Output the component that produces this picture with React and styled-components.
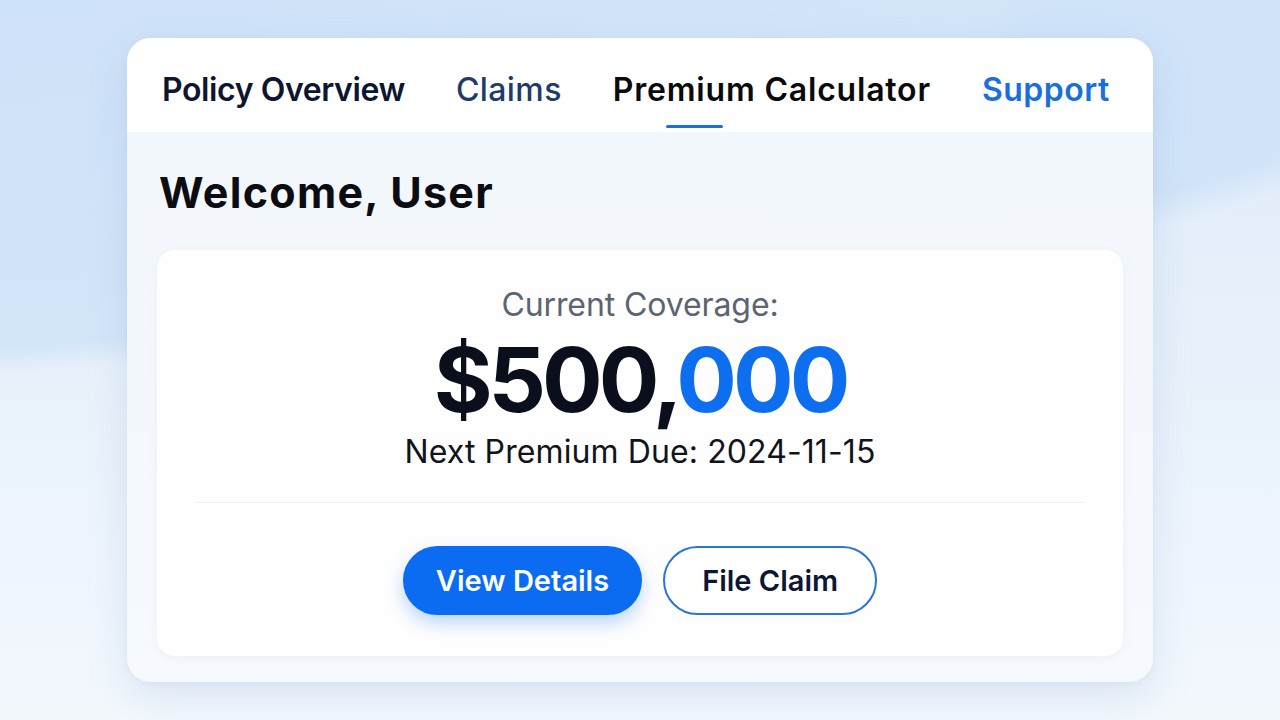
import React, { useState } from 'react';
import styled, { createGlobalStyle } from 'styled-components';

const GlobalStyle = createGlobalStyle`
  html, body {
    margin: 0;
    padding: 0;
  }
  body {
    font-family: Inter, "Noto Sans", sans-serif;
    background:
      radial-gradient(1400px 683px at -200px -300px, #c9def8 0%, #d3e5f9 96%, rgba(214,230,249,0) 100%),
      radial-gradient(1000px 858px at 900px -600px, #c9def8 0%, #d1e4f9 96%, rgba(214,230,249,0) 100%),
      linear-gradient(180deg, #dfebfa 0%, #e8f1fb 50%, #f3f8fd 100%);
    min-height: 720px;
  }
`;

const Page = styled.div`
  width: 1280px;
  height: 720px;
  display: flex;
  justify-content: center;
  padding-top: 38px;
  box-sizing: border-box;
`;

const Panel = styled.div`
  width: 1026px;
  height: 644px;
  border-radius: 24px;
  overflow: hidden;
  background: linear-gradient(180deg, #f2f7fc 0%, #f6f9fd 100%);
  box-shadow: 0 16px 40px rgba(110, 150, 200, 0.18), 0 2px 6px rgba(110, 150, 200, 0.08);
  display: flex;
  flex-direction: column;
`;

const TabBar = styled.nav`
  height: 94px;
  background: #ffffff;
  display: flex;
  align-items: stretch;
  gap: 51px;
  padding: 0 0 0 35px;
`;

const Tab = styled.button`
  position: relative;
  border: none;
  background: none;
  padding: 8px 0 0;
  font-family: inherit;
  font-size: 32px;
  letter-spacing: ${(p) => p.$spacing || '-0.3px'};
  font-weight: ${(p) => p.$weight || 600};
  color: ${(p) => p.$color};
  cursor: pointer;
  display: flex;
  align-items: center;

  &::after {
    content: '';
    display: ${(p) => (p.$active ? 'block' : 'none')};
    position: absolute;
    left: 53px;
    bottom: 4px;
    width: 57px;
    height: 3px;
    border-radius: 2px;
    background: #1a6fe0;
  }
`;

const Body = styled.main`
  flex: 1;
  padding: 36px 30px 26px 30px;
  display: flex;
  flex-direction: column;
`;

const Greeting = styled.h1`
  margin: 0 0 34px 2px;
  font-size: 43px;
  font-weight: 700;
  letter-spacing: 1.3px;
  color: #0b0d12;
  line-height: 48px;
`;

const Card = styled.section`
  flex: 1;
  background: #fefefe;
  border-radius: 18px;
  box-shadow: 0 2px 10px rgba(120, 150, 190, 0.08);
  display: flex;
  flex-direction: column;
  align-items: center;
  padding: 35px 38px 0;
`;

const Label = styled.div`
  font-size: 32px;
  color: #5b6472;
  letter-spacing: -0.1px;
  line-height: 40px;
`;

const Amount = styled.div`
  margin-top: 5px;
  font-size: 90px;
  font-weight: 700;
  letter-spacing: -4px;
  line-height: 100px;
  color: #0b0f1c;

  span {
    color: #0d6ef0;
  }
`;

const DueLine = styled.div`
  margin-top: 2px;
  font-size: 32px;
  color: #11141b;
  letter-spacing: 0.1px;
  line-height: 40px;
`;

const Divider = styled.hr`
  align-self: stretch;
  border: none;
  height: 1px;
  background: #eceef2;
  margin: 30px 0 43px;
`;

const Actions = styled.div`
  display: flex;
  gap: 21px;
`;

const ActionButton = styled.button`
  height: 69px;
  padding: 0 ${(p) => (p.$primary ? 31 : 37)}px;
  border-radius: 35px;
  font-family: inherit;
  font-size: 29px;
  font-weight: 600;
  letter-spacing: 0;
  cursor: pointer;
  border: 2px solid ${(p) => (p.$primary ? '#0b6cf1' : '#2e74d8')};
  background: ${(p) => (p.$primary ? '#0b6cf1' : '#ffffff')};
  color: ${(p) => (p.$primary ? '#ffffff' : '#0d1733')};
  box-shadow: ${(p) => (p.$primary ? '0 8px 18px rgba(11, 108, 241, 0.28)' : 'none')};
`;

const tabs = [
  { name: 'Policy Overview', color: '#0d1630', weight: 600, spacing: '-0.4px' },
  { name: 'Claims', color: '#213a6c', weight: 500, spacing: '0.4px' },
  { name: 'Premium Calculator', color: '#0a0a0c', weight: 600, spacing: '0.8px' },
  { name: 'Support', color: '#1a6fe0', weight: 600, spacing: '0.5px' },
];

function App() {
  const [active, setActive] = useState('Premium Calculator');

  return (
    <>
      <GlobalStyle />
      <Page>
        <Panel>
          <TabBar>
            {tabs.map((tab) => (
              <Tab
                key={tab.name}
                $color={tab.color}
                $weight={tab.weight}
                $spacing={tab.spacing}
                $active={active === tab.name}
                onClick={() => setActive(tab.name)}
              >
                {tab.name}
              </Tab>
            ))}
          </TabBar>
          <Body>
            <Greeting>Welcome, User</Greeting>
            <Card>
              <Label>Current Coverage:</Label>
              <Amount>
                $500,<span>000</span>
              </Amount>
              <DueLine>Next Premium Due: 2024-11-15</DueLine>
              <Divider />
              <Actions>
                <ActionButton $primary>View Details</ActionButton>
                <ActionButton>File Claim</ActionButton>
              </Actions>
            </Card>
          </Body>
        </Panel>
      </Page>
    </>
  );
}

export default App;
